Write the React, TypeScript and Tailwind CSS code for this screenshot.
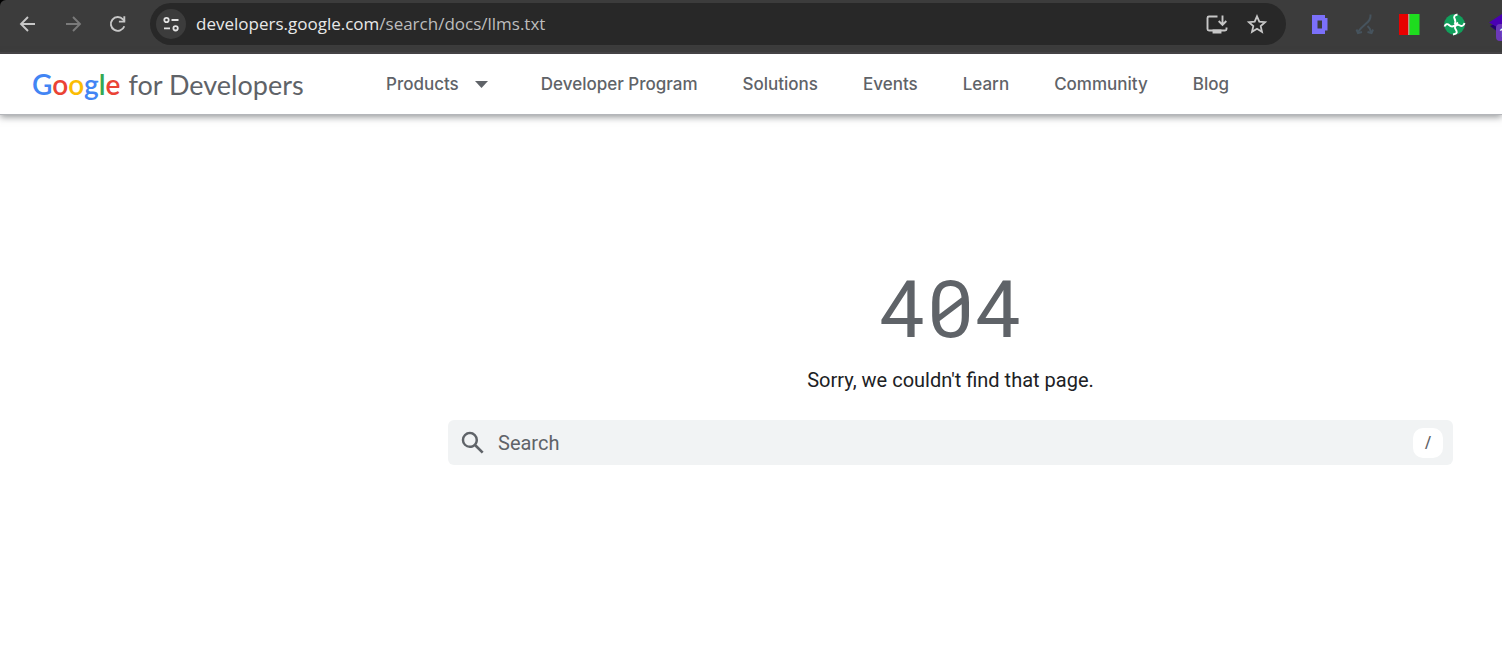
import { useState } from 'react';

const NAV_LINKS = ['Developer Program', 'Solutions', 'Events', 'Learn', 'Community', 'Blog'];

function BrowserBar() {
    return (
        <div className="bg-black">
            <div className="flex h-[54px] items-center overflow-hidden rounded-tl-md border-b-2 border-[#464446] bg-[#3c3c3c] pb-1 text-[#c7c7c7]">
                <div className="flex shrink-0 items-center gap-[21px] pl-4">
                    <button type="button" aria-label="Back" className="flex size-6 items-center justify-center">
                        <svg className="size-6" viewBox="0 0 24 24" fill="none" stroke="currentColor" strokeWidth="1.9">
                            <path d="M19 12H5M12 5l-7 7 7 7" />
                        </svg>
                    </button>
                    <button type="button" aria-label="Forward" className="flex size-6 items-center justify-center text-[#7a7a7a]">
                        <svg className="size-6" viewBox="0 0 24 24" fill="none" stroke="currentColor" strokeWidth="1.9">
                            <path d="M5 12h14M12 5l7 7-7 7" />
                        </svg>
                    </button>
                    <button type="button" aria-label="Reload" className="flex size-6 items-center justify-center">
                        <svg className="size-6" viewBox="0 0 24 24" fill="none" stroke="currentColor" strokeWidth="1.9">
                            <path d="M18.3 14.2A6.9 6.9 0 1 1 17 7.4L18.6 9.3" />
                            <path d="M18.3 4.3v5.3h-5.4" />
                        </svg>
                    </button>
                </div>

                <div className="ml-5 flex h-[42px] min-w-0 flex-1 items-center rounded-full bg-[#282828] pr-[17px] pl-[6px]">
                    <button type="button" aria-label="Site information" className="flex size-[30px] shrink-0 items-center justify-center rounded-full bg-[#3c3c3c] text-[#e3e3e3]">
                        <svg className="size-[18px]" viewBox="0 0 18 18" fill="none" stroke="currentColor" strokeWidth="1.8">
                            <circle cx="4.5" cy="5" r="2.2" />
                            <path d="M9.5 5h7M2 13.3h6" />
                            <circle cx="13.6" cy="13.3" r="2.2" />
                        </svg>
                    </button>
                    <p className="ml-[10px] flex-1 truncate font-['Open_Sans','Noto_Sans',sans-serif] text-[17px] text-[#bdbdbd]">
                        <span className="text-[#e8e8e8]">developers.google.com</span>/search/docs/llms.txt
                    </p>
                    <div className="flex items-center gap-4">
                        <button type="button" aria-label="Install app" className="flex size-6 items-center justify-center">
                            <svg className="size-6" viewBox="0 0 24 24" fill="none" stroke="currentColor" strokeWidth="1.9">
                                <path d="M12.5 4.5H4A1.5 1.5 0 0 0 2.5 6v11A1.5 1.5 0 0 0 4 18.5h16a1.5 1.5 0 0 0 1.5-1.5v-1.5" />
                                <path d="M17.5 3.5v9M13.7 9l3.8 3.8L21.3 9" />
                                <path d="M8.5 18.5h7v2h-7z" fill="currentColor" />
                            </svg>
                        </button>
                        <button type="button" aria-label="Bookmark this page" className="flex size-6 items-center justify-center">
                            <svg className="size-6" viewBox="0 0 24 24" fill="none" stroke="currentColor" strokeWidth="1.8">
                                <path d="M12 4.3l2.3 5.4 5.8.5-4.4 3.9 1.3 5.7-5-3-5 3 1.3-5.7-4.4-3.9 5.8-.5z" />
                            </svg>
                        </button>
                    </div>
                </div>

                <div className="flex w-[216px] shrink-0 items-center gap-[21px] pl-[21px]">
                    <svg className="size-6 shrink-0" viewBox="0 0 24 24" fill="#7b70fa" fillRule="evenodd">
                        <path d="M5 3h13v3h2.500v12.500H18V22H5zM10.500 8.500v8H15v-8z" />
                    </svg>
                    <svg className="size-6 shrink-0" viewBox="0 0 24 24" fill="none" stroke="#46535d" strokeWidth="2">
                        <path d="M18.5 2.500c.5 5-2 7-5.500 10S8 17 6 20" />
                        <path d="M15.500 14c2 1.500 3 3.500 3.500 6" />
                        <path d="M4.500 17.500l1.500 3.500 4-1M15.500 20l4 1 1.500-3.500" />
                    </svg>
                    <svg className="size-6 shrink-0" viewBox="0 0 24 24">
                        <path d="M2 2h9.500v21H2z" fill="#e80000" />
                        <path d="M11.500 2h1v21h-1z" fill="#f2fff2" />
                        <path d="M12.500 2h10v21h-10z" fill="#1edc1e" />
                    </svg>
                    <svg className="size-6 shrink-0" viewBox="0 0 24 24">
                        <circle cx="12.500" cy="12.500" r="10.400" fill="#11a05c" />
                        <path
                            d="M15.500 2.500c-3 .5-4 2-3 4s1.500 3.500 0 5.500M22.500 11c-.5 3-3 3.500-4.500 2.500s-3-1-5 1M2.500 14.500c1-2.500 3-3 4.500-1.500s3 2.500 5.500.5l3.500-3M11 22.500c3-.5 4.500-1.500 3.500-3.500s-2-2.500-1.500-4.500"
                            fill="none"
                            stroke="#fff"
                            strokeWidth="1.9"
                        />
                    </svg>
                    <div className="relative size-6 shrink-0">
                        <svg className="size-6" viewBox="0 0 24 24">
                            <path d="M3 14l12-5 9 5-9 9z" fill="#22006e" />
                            <path d="M2 10.500L15 2l9 7v5l-9 4z" fill="#4a00b4" />
                        </svg>
                        <span className="absolute top-3 left-[9px] w-5 rounded bg-[#6b38b8] pl-[3px] font-['Open_Sans',sans-serif] text-xs leading-[17px] font-semibold text-white">1</span>
                    </div>
                </div>
            </div>
        </div>
    );
}

function SiteHeader() {
    return (
        <header className="relative flex h-[61px] items-center border-b border-[#b4b6ba] bg-white pl-8 font-['Inter',sans-serif] text-[#5f6368] shadow-[0_2px_7px_rgba(60,64,67,0.55)]">
            <a href="#" className="flex w-[354px] shrink-0 items-baseline gap-2 font-['Lato',sans-serif] text-[27px] leading-7 whitespace-nowrap">
                <span className="text-[28px] font-semibold">
                    <span className="text-[#4285f4]">G</span>
                    <span className="text-[#ea4335]">o</span>
                    <span className="text-[#fbbc04]">o</span>
                    <span className="text-[#4285f4]">g</span>
                    <span className="text-[#34a853]">l</span>
                    <span className="text-[#ea4335]">e</span>
                </span>
                <span>for Developers</span>
            </a>
            <nav className="flex items-center gap-[45px] text-[17px] leading-7 font-medium whitespace-nowrap">
                <button type="button" className="flex items-center gap-4 pr-2">
                    Products
                    <svg className="h-[7px] w-[13px]" viewBox="0 0 13 7" fill="currentColor">
                        <path d="M0 0h13L6.5 7z" />
                    </svg>
                </button>
                {NAV_LINKS.map((label) => (
                    <a key={label} href="#">{label}</a>
                ))}
            </nav>
        </header>
    );
}

export default function App() {
    const [query, setQuery] = useState('');

    return (
        <div className="min-h-screen bg-white font-['Roboto',sans-serif]">
            <BrowserBar />
            <SiteHeader />

            <main className="flex flex-col items-center pt-[141px] pr-[49px] pl-[448px]">
                <h1 className="font-['Roboto_Mono',monospace] text-[80px] leading-[100px] text-[#5f6368]">404</h1>
                <p className="mt-2 text-xl leading-8 text-[#202124]">Sorry, we couldn't find that page.</p>

                <form
                    onSubmit={(e) => e.preventDefault()}
                    className="mt-6 flex h-[45px] w-full items-center gap-[10px] rounded-md bg-[#f1f3f4] px-[10px] text-[#5f6368]"
                >
                    <svg className="size-[30px] shrink-0" viewBox="0 0 24 24" fill="currentColor">
                        <path d="M20.49 19l-5.73-5.73C15.53 12.2 16 10.91 16 9.5A6.5 6.5 0 1 0 9.5 16c1.41 0 2.7-.47 3.77-1.24L19 20.49 20.49 19zM5 9.5C5 7.01 7.01 5 9.5 5S14 7.01 14 9.5 11.99 14 9.5 14 5 11.99 5 9.5z" />
                    </svg>
                    <input
                        type="text"
                        aria-label="Search"
                        placeholder="Search"
                        value={query}
                        onChange={(e) => setQuery(e.target.value)}
                        className="min-w-0 flex-1 bg-transparent text-xl outline-none placeholder:text-[#5f6368]"
                    />
                    <kbd className="flex size-[30px] items-center justify-center rounded-[10px] bg-white font-['Roboto',sans-serif] text-base font-medium text-[#5f6368]">/</kbd>
                </form>
            </main>
        </div>
    );
}
